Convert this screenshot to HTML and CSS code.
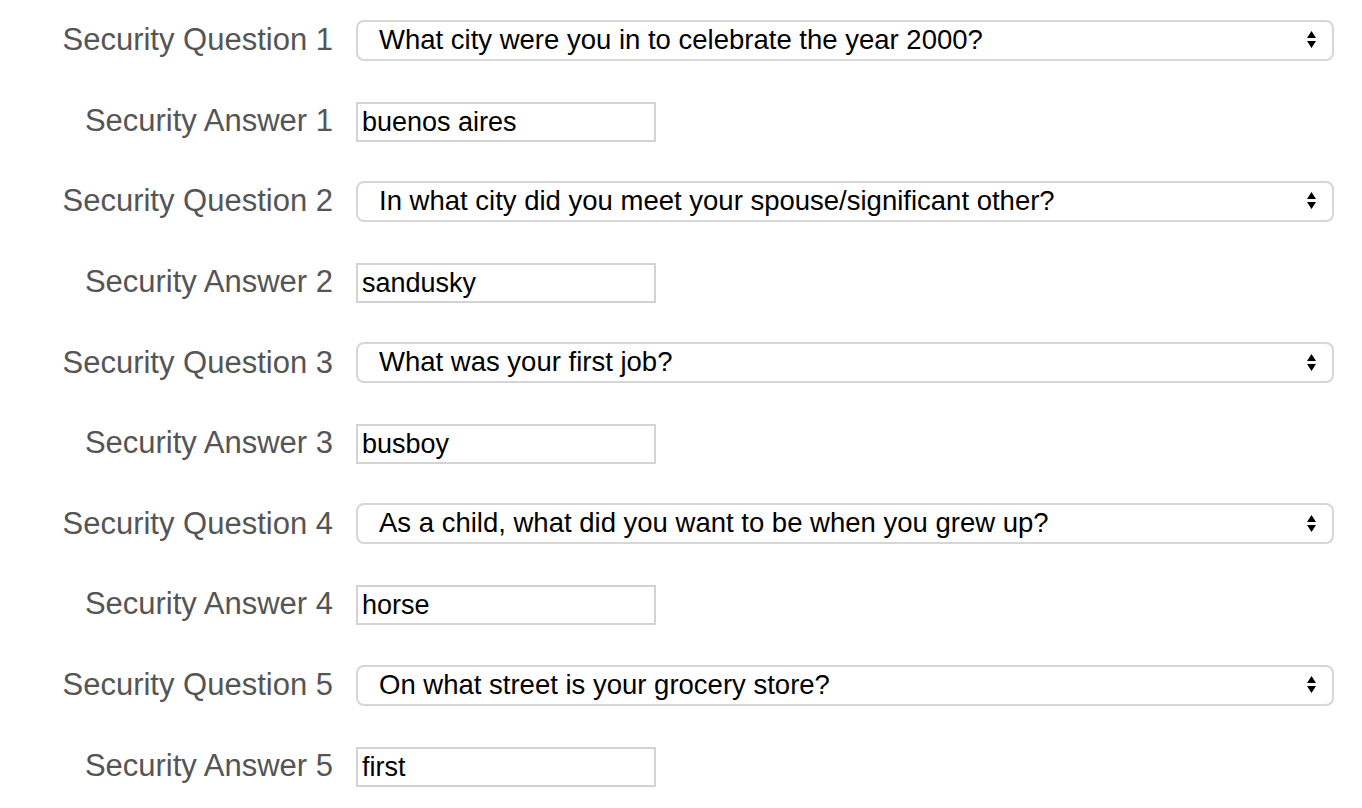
FILE: index.html
```html
<!DOCTYPE html>
<html>
<head>
<meta charset="utf-8">
<link rel="stylesheet" href="styles.css">
</head>
<body>
<form class="form">
  <label class="label">Security Question 1</label>
  <div class="select-wrap"><div class="select">What city were you in to celebrate the year 2000?</div><svg class="arrows" width="9" height="18" viewBox="0 0 9 18"><path d="M4.5 0 L9 7 L0 7 Z M0 10 L9 10 L4.5 17 Z" fill="#000"/></svg></div>
  <label class="label">Security Answer 1</label>
  <div class="field"><div class="input">buenos aires</div></div>

  <label class="label">Security Question 2</label>
  <div class="select-wrap"><div class="select">In what city did you meet your spouse/significant other?</div><svg class="arrows" width="9" height="18" viewBox="0 0 9 18"><path d="M4.5 0 L9 7 L0 7 Z M0 10 L9 10 L4.5 17 Z" fill="#000"/></svg></div>
  <label class="label">Security Answer 2</label>
  <div class="field"><div class="input">sandusky</div></div>

  <label class="label">Security Question 3</label>
  <div class="select-wrap"><div class="select">What was your first job?</div><svg class="arrows" width="9" height="18" viewBox="0 0 9 18"><path d="M4.5 0 L9 7 L0 7 Z M0 10 L9 10 L4.5 17 Z" fill="#000"/></svg></div>
  <label class="label">Security Answer 3</label>
  <div class="field"><div class="input">busboy</div></div>

  <label class="label">Security Question 4</label>
  <div class="select-wrap"><div class="select">As a child, what did you want to be when you grew up?</div><svg class="arrows" width="9" height="18" viewBox="0 0 9 18"><path d="M4.5 0 L9 7 L0 7 Z M0 10 L9 10 L4.5 17 Z" fill="#000"/></svg></div>
  <label class="label">Security Answer 4</label>
  <div class="field"><div class="input">horse</div></div>

  <label class="label">Security Question 5</label>
  <div class="select-wrap"><div class="select">On what street is your grocery store?</div><svg class="arrows" width="9" height="18" viewBox="0 0 9 18"><path d="M4.5 0 L9 7 L0 7 Z M0 10 L9 10 L4.5 17 Z" fill="#000"/></svg></div>
  <label class="label">Security Answer 5</label>
  <div class="field"><div class="input">first</div></div>
</form>
</body>
</html>
```

FILE: styles.css
```css
html, body {
  margin: 0;
  padding: 0;
  background: #fff;
}
body {
  font-family: "Liberation Sans", Arial, Helvetica, sans-serif;
}
.form {
  display: grid;
  grid-template-columns: 333px 978px;
  grid-auto-rows: 80.6px;
  column-gap: 23px;
  align-items: center;
}
.label {
  text-align: right;
  font-size: 31px;
  color: #555;
  line-height: 36px;
}
.select-wrap {
  position: relative;
}
.select {
  box-sizing: border-box;
  height: 41px;
  border: 2px solid #d6d6d6;
  border-radius: 8px;
  padding: 0 40px 0 21px;
  font-size: 27.5px;
  line-height: 36px;
  color: #000;
  white-space: nowrap;
}
.arrows {
  position: absolute;
  right: 18px;
  top: 11.5px;
}
.field {
  padding-top: 2px;
}
.input {
  box-sizing: border-box;
  width: 300px;
  height: 40px;
  border: 2px solid #d3d3d3;
  padding: 0 4px;
  font-size: 27px;
  line-height: 36px;
  color: #000;
}
```
